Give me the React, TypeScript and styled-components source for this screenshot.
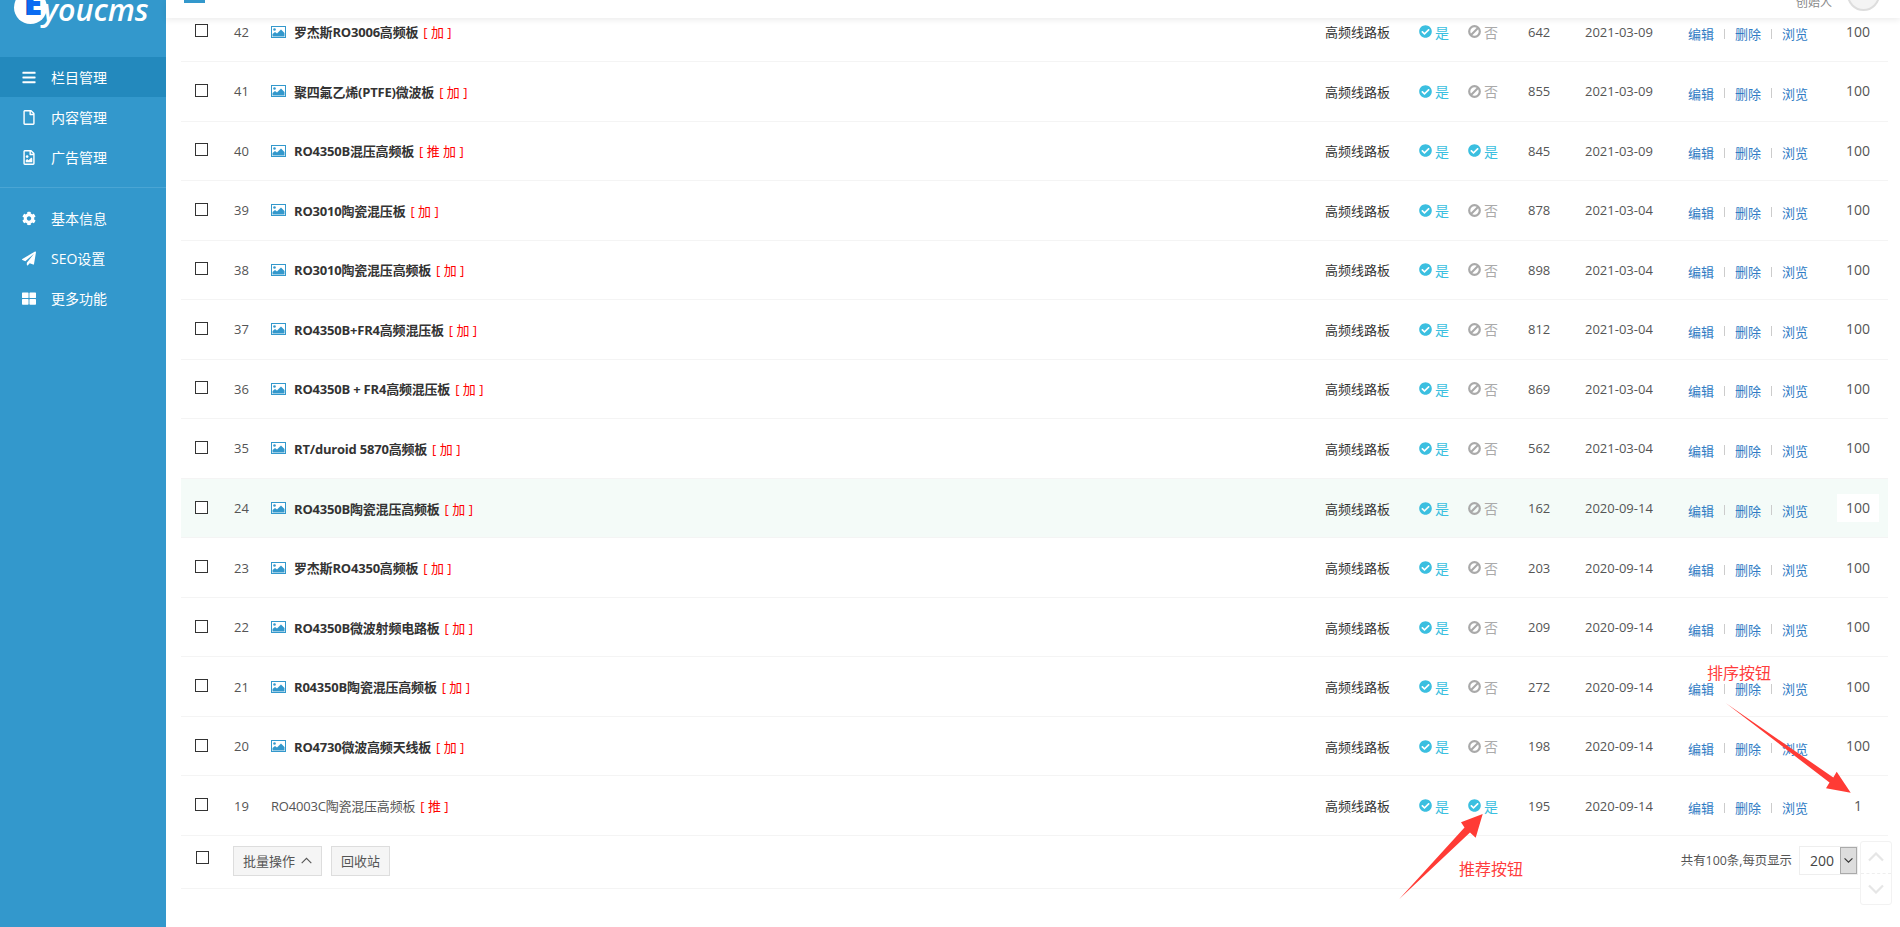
import React from "react";
import styled, { createGlobalStyle } from "styled-components";
import {
  FaBars,
  FaCheckCircle,
  FaCog,
  FaPaperPlane,
  FaRegFile,
  FaRegFileImage,
  FaThLarge,
} from "react-icons/fa";

const GlobalStyle = createGlobalStyle`
  html, body {
    margin: 0;
    padding: 0;
    background: #fff;
    font-family: "Open Sans", "Noto Sans CJK SC", sans-serif;
    font-size: 13px;
    color: #333;
  }
`;

const Page = styled.div`
  position: relative;
  display: flex;
  width: 1900px;
  height: 927px;
  overflow: hidden;
`;

const Sidebar = styled.aside`
  width: 166px;
  flex-shrink: 0;
  background: #3398cc;
  color: #fff;
`;

const LogoBar = styled.div`
  display: flex;
  align-items: flex-start;
  height: 57px;
  padding-left: 14px;
  overflow: hidden;
`;

const LogoMark = styled.div`
  display: flex;
  align-items: flex-end;
  justify-content: center;
  width: 33px;
  height: 33px;
  margin-top: -9px;
  border-radius: 50%;
  background: #fff;
  color: #0b6cf2;
  font-size: 31px;
  font-weight: 800;
  line-height: 31px;
  padding-bottom: 5px;
  padding-left: 6px;
  box-sizing: border-box;
  text-shadow: -1px 0 0 #0a3f9c;
`;

const LogoText = styled.div`
  margin-top: -14px;
  margin-left: -4px;
  font-size: 30.5px;
  font-style: italic;
  font-weight: 600;
  line-height: 46px;
`;

const MenuGroup = styled.div`
  padding-bottom: 10px;
  & + & {
    border-top: 1px solid #4aa5d4;
    padding-top: 10px;
  }
`;

const MenuItem = styled.div<{ $active?: boolean }>`
  display: flex;
  align-items: center;
  height: 40px;
  padding-left: 22px;
  background: ${(p) => (p.$active ? "#2389bd" : "transparent")};
  font-size: 14px;
  svg {
    width: 14px;
    height: 15px;
    margin-right: 15px;
  }
`;

const Main = styled.main`
  position: relative;
  flex: 1;
  min-width: 0;
`;

const TopBar = styled.header`
  position: absolute;
  top: 0;
  left: 0;
  right: 0;
  height: 18px;
  background: #fff;
  box-shadow: 0 2px 6px rgba(0, 0, 0, 0.08);
  overflow: hidden;
  z-index: 2;
`;

const TopTab = styled.div`
  position: absolute;
  left: 18px;
  top: 0;
  width: 21px;
  height: 3px;
  background: #3398cc;
`;

const TopUser = styled.div`
  position: absolute;
  right: 20px;
  top: -22px;
  display: flex;
  align-items: center;
  gap: 15px;
  color: #888;
  font-size: 12px;
`;

const Avatar = styled.div`
  width: 29px;
  height: 29px;
  border: 2px solid #ddd;
  border-radius: 50%;
  background: #f4f4f4;
`;

const Creator = styled.span`
  margin-top: 15px;
`;

const List = styled.div`
  margin: 2.5px 12px 0 15px;
`;

const gridColumns = "53px 37px 1fr 94px 49px 60px 57px 103px 149px 51px";

const Row = styled.div<{ $hover?: boolean }>`
  display: grid;
  grid-template-columns: ${gridColumns};
  align-items: center;
  height: 59.54px;
  box-sizing: border-box;
  border-bottom: 1px solid #f4f4f4;
  background: ${(p) => (p.$hover ? "#f4fbf8" : "transparent")};
  color: #555;
`;

const CheckBox = styled.div`
  width: 13px;
  height: 13px;
  box-sizing: border-box;
  margin: -2px 0 0 14px;
  border: 1px solid #333;
  background: #fff;
`;

const Title = styled.div`
  display: flex;
  align-items: center;
  white-space: nowrap;
`;

const PicIcon = styled.svg`
  width: 15px;
  height: 12px;
  margin-right: 8px;
`;

const TitleText = styled.span<{ $plain?: boolean }>`
  font-weight: ${(p) => (p.$plain ? 400 : 700)};
  color: ${(p) => (p.$plain ? "#555" : "#333")};
  letter-spacing: -0.2px;
`;

const Tag = styled.span`
  margin-left: 5px;
  color: #f00;
`;

const Category = styled.div`
  color: #333;
`;

const Flag = styled.div<{ $on: boolean }>`
  display: flex;
  align-items: center;
  gap: 3px;
  font-size: 14px;
  color: ${(p) => (p.$on ? "#3bbfe0" : "#aaa")};
  svg {
    width: 13px;
    height: 13px;
  }
`;

const Actions = styled.div`
  display: flex;
  align-items: center;
  margin-top: 4px;
`;

const ActionLink = styled.a`
  color: #2f7bc4;
`;

const ActionSep = styled.i`
  width: 1px;
  height: 10px;
  margin: 0 10px;
  background: #ccc;
`;

const SortCell = styled.div<{ $hover?: boolean }>`
  width: 42px;
  height: 28px;
  font-size: 14px;
  line-height: 28px;
  text-align: center;
  color: #555;
  background: ${(p) => (p.$hover ? "#fff" : "transparent")};
`;

const Footer = styled.div`
  display: flex;
  align-items: flex-start;
  height: 53px;
  box-sizing: border-box;
  padding: 10px 30px 0 15px;
  border-bottom: 1px solid #f4f4f4;
`;

const FooterCheck = styled(CheckBox)`
  margin: 5px 24px 0 0;
`;

const Btn = styled.div`
  display: flex;
  align-items: center;
  gap: 6px;
  height: 30px;
  box-sizing: border-box;
  padding: 0 9px;
  margin-right: 9px;
  border: 1px solid #ddd;
  background: #f5f5f5;
  color: #555;
`;

const Pager = styled.div`
  display: flex;
  align-items: flex-start;
  margin-left: auto;
  color: #555;
`;

const PagerLabel = styled.span`
  margin: 5px 7px 0 0;
  font-size: 12.4px;
`;

const SelectBox = styled.div`
  display: flex;
  align-items: center;
  justify-content: space-between;
  width: 59px;
  height: 29px;
  box-sizing: border-box;
  padding-left: 10px;
  border: 1px solid #eee;
  color: #444;
  font-size: 14px;
`;

const SelectArrow = styled.div`
  display: flex;
  align-items: center;
  justify-content: center;
  width: 17px;
  height: 27px;
  box-sizing: border-box;
  border: 1px solid #aaa;
  background: #ddd;
`;

const ScrollWidget = styled.div`
  position: absolute;
  left: 1860px;
  top: 841px;
  display: flex;
  flex-direction: column;
  width: 32px;
  height: 64px;
  box-sizing: border-box;
  border: 1px solid #f2f2f2;
  border-radius: 3px;
  background: #fff;
`;

const ScrollBtn = styled.div`
  flex: 1;
  display: flex;
  align-items: center;
  justify-content: center;
  & + & {
    border-top: 1px dashed #eee;
  }
`;

const Note = styled.div<{ $left: number; $top: number }>`
  position: absolute;
  left: ${(p) => p.$left}px;
  top: ${(p) => p.$top}px;
  color: #ff3d3d;
  font-size: 16px;
  line-height: 22px;
  white-space: nowrap;
  z-index: 3;
`;

const ArrowLayer = styled.svg`
  position: absolute;
  left: 0;
  top: 0;
  width: 1900px;
  height: 927px;
  pointer-events: none;
  z-index: 3;
`;

type Item = {
  id: number;
  title: string;
  tags: string;
  rec?: boolean;
  clicks: number;
  date: string;
  sort?: number;
  plain?: boolean;
  hover?: boolean;
};

const items: Item[] = [
  { id: 42, title: "罗杰斯RO3006高频板", tags: "加", clicks: 642, date: "2021-03-09" },
  { id: 41, title: "聚四氟乙烯(PTFE)微波板", tags: "加", clicks: 855, date: "2021-03-09" },
  { id: 40, title: "RO4350B混压高频板", tags: "推 加", rec: true, clicks: 845, date: "2021-03-09" },
  { id: 39, title: "RO3010陶瓷混压板", tags: "加", clicks: 878, date: "2021-03-04" },
  { id: 38, title: "RO3010陶瓷混压高频板", tags: "加", clicks: 898, date: "2021-03-04" },
  { id: 37, title: "RO4350B+FR4高频混压板", tags: "加", clicks: 812, date: "2021-03-04" },
  { id: 36, title: "RO4350B + FR4高频混压板", tags: "加", clicks: 869, date: "2021-03-04" },
  { id: 35, title: "RT/duroid 5870高频板", tags: "加", clicks: 562, date: "2021-03-04" },
  { id: 24, title: "RO4350B陶瓷混压高频板", tags: "加", clicks: 162, date: "2020-09-14", hover: true },
  { id: 23, title: "罗杰斯RO4350高频板", tags: "加", clicks: 203, date: "2020-09-14" },
  { id: 22, title: "RO4350B微波射频电路板", tags: "加", clicks: 209, date: "2020-09-14" },
  { id: 21, title: "R04350B陶瓷混压高频板", tags: "加", clicks: 272, date: "2020-09-14" },
  { id: 20, title: "RO4730微波高频天线板", tags: "加", clicks: 198, date: "2020-09-14" },
  { id: 19, title: "RO4003C陶瓷混压高频板", tags: "推", rec: true, clicks: 195, date: "2020-09-14", sort: 1, plain: true },
];

function Picture() {
  return (
    <PicIcon viewBox="0 0 15 12">
      <rect x="0.5" y="0.5" width="14" height="11" fill="#fff" stroke="#3398cc" />
      <circle cx="3.5" cy="3.5" r="1.3" fill="#3398cc" />
      <path d="M1.5 10.5 L1.5 8 L4 6 L6 7.5 L10 3.5 L13.5 7 L13.5 10.5 Z" fill="#3398cc" />
    </PicIcon>
  );
}

function BanIcon() {
  return (
    <svg viewBox="0 0 13 13">
      <circle cx="6.5" cy="6.5" r="5.3" fill="none" stroke="#a9a9a9" strokeWidth="2.2" />
      <path d="M3 10 L10 3" stroke="#a9a9a9" strokeWidth="2.2" />
    </svg>
  );
}

function YesNo({ on }: { on: boolean }) {
  return (
    <Flag $on={on}>
      {on ? <FaCheckCircle /> : <BanIcon />}
      {on ? "是" : "否"}
    </Flag>
  );
}

function Chevron({ up, size, color, width }: { up?: boolean; size: number; color: string; width: number }) {
  return (
    <svg width={size} height={size / 2 + 2} viewBox="0 0 16 9">
      <path d={up ? "M1 8 L8 1 L15 8" : "M1 1 L8 8 L15 1"} fill="none" stroke={color} strokeWidth={width} />
    </svg>
  );
}

function App() {
  return (
    <Page>
      <GlobalStyle />
      <Sidebar>
        <LogoBar>
          <LogoMark>E</LogoMark>
          <LogoText>youcms</LogoText>
        </LogoBar>
        <MenuGroup>
          <MenuItem $active><FaBars />栏目管理</MenuItem>
          <MenuItem><FaRegFile />内容管理</MenuItem>
          <MenuItem><FaRegFileImage />广告管理</MenuItem>
        </MenuGroup>
        <MenuGroup>
          <MenuItem><FaCog />基本信息</MenuItem>
          <MenuItem><FaPaperPlane />SEO设置</MenuItem>
          <MenuItem><FaThLarge />更多功能</MenuItem>
        </MenuGroup>
      </Sidebar>

      <Main>
        <TopBar>
          <TopTab />
          <TopUser>
            <Creator>创始人</Creator>
            <Avatar />
          </TopUser>
        </TopBar>

        <List>
          {items.map((item) => (
            <Row key={item.id} $hover={item.hover}>
              <CheckBox />
              <div>{item.id}</div>
              <Title>
                {!item.plain && <Picture />}
                <TitleText $plain={item.plain}>{item.title}</TitleText>
                <Tag>[ {item.tags} ]</Tag>
              </Title>
              <Category>高频线路板</Category>
              <YesNo on />
              <YesNo on={!!item.rec} />
              <div>{item.clicks}</div>
              <div>{item.date}</div>
              <Actions>
                <ActionLink>编辑</ActionLink>
                <ActionSep />
                <ActionLink>删除</ActionLink>
                <ActionSep />
                <ActionLink>浏览</ActionLink>
              </Actions>
              <SortCell $hover={item.hover}>{item.sort ?? 100}</SortCell>
            </Row>
          ))}
          <Footer>
            <FooterCheck />
            <Btn>
              批量操作
              <Chevron up size={11} color="#555" width={1.6} />
            </Btn>
            <Btn>回收站</Btn>
            <Pager>
              <PagerLabel>共有100条,每页显示</PagerLabel>
              <SelectBox>
                200
                <SelectArrow>
                  <Chevron size={9} color="#333" width={2} />
                </SelectArrow>
              </SelectBox>
            </Pager>
          </Footer>
        </List>
      </Main>

      <ScrollWidget>
        <ScrollBtn><Chevron up size={16} color="#e6e6e6" width={2.2} /></ScrollBtn>
        <ScrollBtn><Chevron size={16} color="#e6e6e6" width={2.2} /></ScrollBtn>
      </ScrollWidget>

      <Note $left={1707} $top={662}>排序按钮</Note>
      <Note $left={1459} $top={858}>推荐按钮</Note>
      <ArrowLayer viewBox="0 0 1900 927">
        <polygon
          fill="#ff3b35"
          points="1726,703.3 1833.3,777.5 1836.7,771.7 1850.7,792.7 1826,788.3 1829.5,782.5"
        />
        <polygon
          fill="#ff3b35"
          points="1399.3,899 1464.5,827.5 1461,822.3 1482.7,814 1475.7,837.7 1470,832.5"
        />
      </ArrowLayer>
    </Page>
  );
}

export default App;
